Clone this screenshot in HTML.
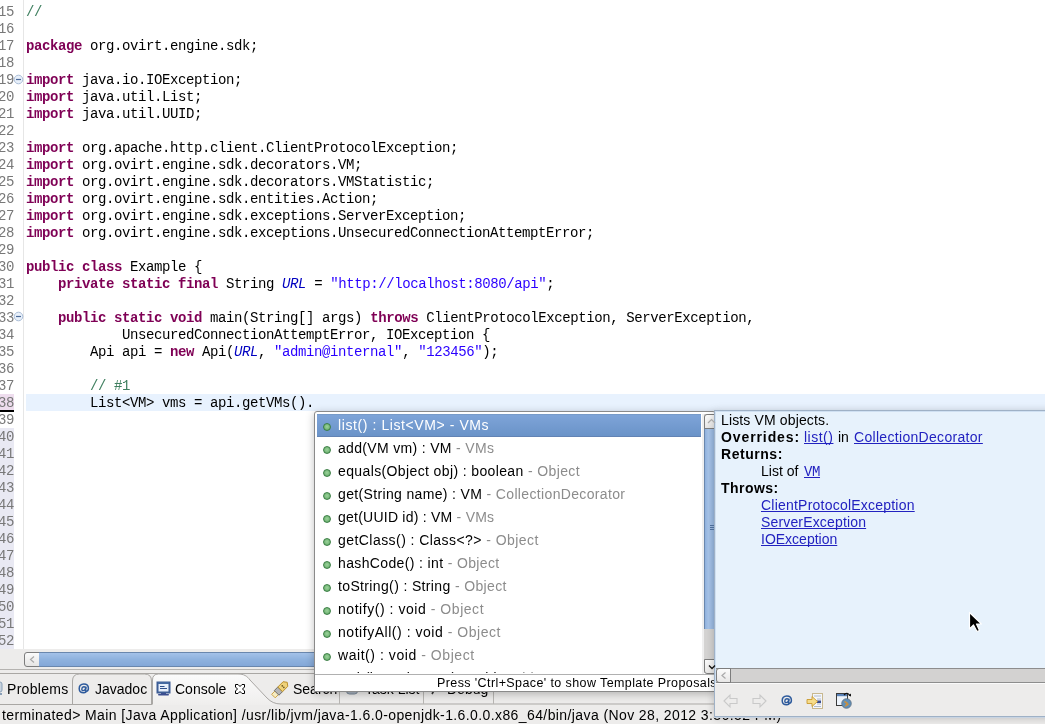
<!DOCTYPE html>
<html><head><meta charset="utf-8">
<style>
*{margin:0;padding:0;box-sizing:border-box}
html,body{width:1045px;height:724px;overflow:hidden;background:#fff;position:relative}
#wrap{position:absolute;left:0;top:0;width:1045px;height:724px;will-change:transform}
body{font-family:"Liberation Sans",sans-serif;-webkit-font-smoothing:antialiased}
.abs{position:absolute}
#code{position:absolute;left:26px;top:-13px;font-family:"Liberation Mono",monospace;font-size:14px;letter-spacing:-0.4px;line-height:17px;white-space:pre;color:#000}
#code div{height:17px}
.k{color:#7F0055;font-weight:bold}
.c{color:#3F7F5F}
.s{color:#2A00FF}
.f{color:#0000C0;font-style:italic}
#nums{position:absolute;left:-10px;top:-13px;width:24px;font-family:"Liberation Mono",monospace;font-size:14px;letter-spacing:-0.4px;line-height:17px;white-space:pre;color:#787878;text-align:right}
#nums div{height:17px}
.it{height:23px;line-height:23px;padding-left:21px;position:relative;font-size:14px;color:#000;white-space:pre}
.it b{font-weight:normal;color:#8c8c8c}
.it.sel{color:#fff}
.it i{position:absolute;left:6px;top:9px;width:8px;height:8px;border-radius:50%;background:radial-gradient(circle at 50% 45%,#9ad39a,#78b87a 60%,#3f8a48);border:1px solid #3b7f45}
.jd{font-size:14px;line-height:17px;white-space:pre;color:#000}
.jd b{font-weight:bold}
.jd u{color:#2222C0;text-decoration:underline;text-decoration-skip-ink:none}
.tab{font-family:"Liberation Sans",sans-serif;font-size:14px;line-height:17px;color:#000;white-space:pre}
</style></head><body><div id="wrap">
<!-- line number tints -->
<div class="abs" style="left:0;top:394px;width:14px;height:17px;background:#EEDDEE"></div>
<div class="abs" style="left:0;top:410px;width:14px;height:2px;background:#000"></div>
<div class="abs" style="left:0;top:428px;width:14px;height:221px;background:#E9E9F3"></div>
<!-- ruler line -->
<div class="abs" style="left:23px;top:0;width:1px;height:649px;background:#E6E6E6"></div>
<!-- current line -->
<div class="abs" style="left:26px;top:394px;width:1019px;height:17px;background:#E8F2FE"></div>
<div id="nums"><div>14</div><div>15</div><div>16</div><div>17</div><div>18</div><div>19</div><div>20</div><div>21</div><div>22</div><div>23</div><div>24</div><div>25</div><div>26</div><div>27</div><div>28</div><div>29</div><div>30</div><div>31</div><div>32</div><div>33</div><div>34</div><div>35</div><div>36</div><div>37</div><div>38</div><div>39</div><div>40</div><div>41</div><div>42</div><div>43</div><div>44</div><div>45</div><div>46</div><div>47</div><div>48</div><div>49</div><div>50</div><div>51</div><div>52</div></div>
<div id="code"><div class="c">//</div><div class="c">//</div><div></div><div><span class="k">package</span> org.ovirt.engine.sdk;</div><div></div><div><span class="k">import</span> java.io.IOException;</div><div><span class="k">import</span> java.util.List;</div><div><span class="k">import</span> java.util.UUID;</div><div></div><div><span class="k">import</span> org.apache.http.client.ClientProtocolException;</div><div><span class="k">import</span> org.ovirt.engine.sdk.decorators.VM;</div><div><span class="k">import</span> org.ovirt.engine.sdk.decorators.VMStatistic;</div><div><span class="k">import</span> org.ovirt.engine.sdk.entities.Action;</div><div><span class="k">import</span> org.ovirt.engine.sdk.exceptions.ServerException;</div><div><span class="k">import</span> org.ovirt.engine.sdk.exceptions.UnsecuredConnectionAttemptError;</div><div></div><div><span class="k">public</span> <span class="k">class</span> Example {</div><div>    <span class="k">private</span> <span class="k">static</span> <span class="k">final</span> String <span class="f">URL</span> = <span class="s">"http://localhost:8080/api"</span>;</div><div></div><div>    <span class="k">public</span> <span class="k">static</span> <span class="k">void</span> main(String[] args) <span class="k">throws</span> ClientProtocolException, ServerException,</div><div>            UnsecuredConnectionAttemptError, IOException {</div><div>        Api api = <span class="k">new</span> Api(<span class="f">URL</span>, <span class="s">"admin@internal"</span>, <span class="s">"123456"</span>);</div><div></div><div>        <span class="c">// #1</span></div><div>        List&lt;VM&gt; vms = api.getVMs().</div></div>

<!-- bottom area -->
<div class="abs" style="left:0;top:649px;width:1045px;height:75px;background:#EDECEB"></div>
<!-- h scrollbar -->
<div class="abs" style="left:24px;top:652px;width:16px;height:15px;background:linear-gradient(#fbfbfb,#e6e5e4);border:1px solid #7d7d7d;border-radius:3px 0 0 3px"></div>
<svg class="abs" style="left:24px;top:652px" width="16" height="15"><path d="M10 4.5 L6.5 7.5 L10 10.5" stroke="#aaa" stroke-width="1.2" fill="none"/></svg>
<div class="abs" style="left:39px;top:652px;width:1006px;height:15px;background:linear-gradient(#a4c2e8,#8fb2de 50%,#84a8d8);border-top:1px solid #6a87ad;border-bottom:1px solid #6a87ad"></div>
<div class="abs" style="left:0;top:669px;width:1045px;height:1px;background:#b5b3b0"></div>
<div class="abs" style="left:0;top:673px;width:1045px;height:1px;background:#a9a7a4"></div>
<div class="abs" style="left:0;top:704px;width:1045px;height:1px;background:#a9a7a4"></div>

<!-- tabs -->
<svg class="abs" style="left:0;top:673px" width="1045" height="32">
 <path d="M72.5 31 V8 Q72.5 1 79.5 1 H144.5 Q151.5 1 151.5 8 V31" fill="none" stroke="#a9a7a4"/>
 <defs><linearGradient id="tg" x1="0" y1="0" x2="0" y2="1"><stop offset="0" stop-color="#fbfbfb"/><stop offset="1" stop-color="#efeeed"/></linearGradient></defs>
 <path d="M152.5 32 V7 Q152.5 1 158.5 1 H238 C244 1 247 3 250 7 L267 25 C271 29 275 31 281 31 H1045 V32 Z" fill="url(#tg)"/>
 <path d="M152.5 31 V7 Q152.5 1 158.5 1 H238 C244 1 247 3 250 7 L267 25 C271 29 275 31 281 31 H1045" fill="none" stroke="#a9a7a4"/>
 <path d="M339.5 31 V6 M423.5 31 V6 M493.5 31 V6" stroke="#b8b6b3"/>
</svg>
<div class="abs" style="left:0;top:704px;width:152px;height:1px;background:#a9a7a4"></div>
<div class="abs tab" style="left:7px;top:681px;letter-spacing:0.3px">Problems</div>
<div class="abs tab" style="left:95px;top:681px">Javadoc</div>
<div class="abs tab" style="left:175px;top:681px">Console</div>
<div class="abs tab" style="left:293px;top:681px">Search</div>
<div class="abs tab" style="left:365px;top:681px">Task List</div>
<div class="abs tab" style="left:447px;top:681px">Debug</div>
<div class="abs tab" id="cons" style="left:2px;top:707px;white-space:pre;letter-spacing:0.4px">terminated&gt; Main [Java Application] /usr/lib/jvm/java-1.6.0-openjdk-1.6.0.0.x86_64/bin/java (Nov 28, 2012 3:36:52 PM)</div>

<svg class="abs" style="left:345px;top:682px" width="14" height="14"><rect x="1.5" y="2" width="11" height="10" rx="3" fill="#a9b4c0" stroke="#7a8898"/></svg>
<svg class="abs" style="left:428px;top:682px" width="14" height="14"><path d="M4 12 L9 3" stroke="#333" stroke-width="1.6"/></svg>
<!-- completion popup -->
<div class="abs" style="left:314px;top:411px;width:402px;height:281px;background:#fff;border:1px solid #8a8a8a;border-radius:3px 3px 0 0;box-shadow:0 2px 8px rgba(0,0,0,0.25)"></div>
<div class="abs" style="left:317px;top:414px;width:384px;height:23px;background:linear-gradient(#7ea4d8,#6a93c8);border-top:1px solid #779bc9;border-bottom:1px solid #6283b4"></div>
<div id="items" class="abs" style="left:317px;top:414px;width:384px;height:259px;overflow:hidden">
<div class="it sel" style="letter-spacing:0.586px"><i></i>list() : List&lt;VM&gt; - VMs</div>
<div class="it" style="letter-spacing:0.33px"><i></i>add(VM vm) : VM<b> - VMs</b></div>
<div class="it" style="letter-spacing:0.378px"><i></i>equals(Object obj) : boolean<b> - Object</b></div>
<div class="it" style="letter-spacing:0.35px"><i></i>get(String name) : VM<b> - CollectionDecorator</b></div>
<div class="it" style="letter-spacing:0.236px"><i></i>get(UUID id) : VM<b> - VMs</b></div>
<div class="it" style="letter-spacing:0.445px"><i></i>getClass() : Class&lt;?&gt;<b> - Object</b></div>
<div class="it" style="letter-spacing:0.362px"><i></i>hashCode() : int<b> - Object</b></div>
<div class="it" style="letter-spacing:0.359px"><i></i>toString() : String<b> - Object</b></div>
<div class="it" style="letter-spacing:0.543px"><i></i>notify() : void<b> - Object</b></div>
<div class="it" style="letter-spacing:0.535px"><i></i>notifyAll() : void<b> - Object</b></div>
<div class="it" style="letter-spacing:0.552px"><i></i>wait() : void<b> - Object</b></div>
<div class="it" style="letter-spacing:0.45px"><i></i>wait(long timeout) : void<b> - Object</b></div>
</div>
<!-- v scrollbar -->
<div class="abs" style="left:702px;top:414px;width:2px;height:260px;background:#efefef"></div>
<div class="abs" style="left:704px;top:414px;width:12px;height:259px;background:#d4d3d2"></div>
<div class="abs" style="left:704px;top:428px;width:12px;height:201px;background:linear-gradient(90deg,#8fb1dd,#a7c4e9 30%,#94b5df);border-left:1px solid #6a87ad"></div>
<div class="abs" style="left:704px;top:414px;width:12px;height:15px;background:linear-gradient(#fbfbfb,#e8e7e6);border:1px solid #7d7d7d;border-radius:3px 0 0 0"></div>
<div class="abs" style="left:704px;top:659px;width:12px;height:15px;background:linear-gradient(#fbfbfb,#e8e7e6);border:1px solid #7d7d7d;border-radius:0 0 0 3px"></div>
<div class="abs" style="left:315px;top:674px;width:400px;height:1px;background:#b0b0b0"></div>

<div class="abs tab" style="left:437px;top:675px;width:300px;font-size:12.5px;letter-spacing:0.4px">Press 'Ctrl+Space' to show Template Proposals</div>

<!-- javadoc popup -->
<div class="abs" style="left:714px;top:410px;width:340px;height:307px;background:#E7F2FC;border:1px solid #9fb1c6;box-shadow:inset 1px 1px 0 #cfe0f2,0 1px 8px rgba(0,0,0,0.22)"></div>
<div class="abs jd" style="left:721px;top:412px;letter-spacing:0.14px">Lists VM objects.</div>
<div class="abs jd" style="left:721px;top:429px"><b style="letter-spacing:0.9px">Overrides:</b></div><div class="abs jd" style="left:804px;top:429px"><u style="letter-spacing:0.5px">list()</u></div><div class="abs jd" style="left:838px;top:429px">in</div><div class="abs jd" style="left:854px;top:429px"><u style="letter-spacing:0.31px">CollectionDecorator</u></div>
<div class="abs jd" style="left:721px;top:446px"><b style="letter-spacing:0.54px">Returns:</b></div>
<div class="abs jd" style="left:761px;top:463px">List of</div><div class="abs jd" style="left:804px;top:463px"><u style="font-family:Liberation Mono;letter-spacing:-0.4px">VM</u></div>
<div class="abs jd" style="left:721px;top:480px"><b style="letter-spacing:0.47px">Throws:</b></div>
<div class="abs jd" style="left:761px;top:497px"><u style="letter-spacing:0.22px">ClientProtocolException</u></div>
<div class="abs jd" style="left:761px;top:514px"><u style="letter-spacing:0.16px">ServerException</u></div>
<div class="abs jd" style="left:761px;top:531px"><u>IOException</u></div>
<div class="abs" style="left:714px;top:717px;width:331px;height:1px;background:#c8d4e2"></div>
<!-- javadoc h scrollbar -->
<div class="abs" style="left:716px;top:668px;width:329px;height:15px;background:#d3d2d1;border-top:1px solid #8d8d8d;border-bottom:1px solid #8d8d8d"></div>
<div class="abs" style="left:716px;top:668px;width:15px;height:15px;background:linear-gradient(#fbfbfb,#e8e7e6);border:1px solid #7d7d7d;border-radius:3px 0 0 3px"></div>
<svg class="abs" style="left:716px;top:668px" width="15" height="15"><path d="M9.5 4.5 L6 7.5 L9.5 10.5" stroke="#aaa" stroke-width="1.2" fill="none"/></svg>
<div class="abs" style="left:715px;top:683px;width:330px;height:1px;background:#fafafa"></div>
<div class="abs" style="left:715px;top:684px;width:330px;height:32px;background:#EDECEB"></div>

<!-- tab icons -->
<svg class="abs" style="left:0;top:681px" width="4" height="16"><rect x="-6" y="1" width="8" height="10" rx="2" fill="#c8d4e0" stroke="#8aa0b8"/><rect x="-6" y="12" width="8" height="2" fill="#8aa0b8"/></svg>
<svg class="abs" style="left:78px;top:683px" width="12" height="12"><path d="M8.6 8.3 Q7.6 9.6 6 9.8 Q1.3 10 1.2 5.8 Q1.2 1.2 5.8 1.1 Q10.3 1.1 10.4 5.3 Q10.4 8.2 8.4 8.2 Q7.4 8.2 7.6 6.8 L8.1 3.7" fill="none" stroke="#2d5a9c" stroke-width="1.5"/><path d="M7.7 5.5 Q7.4 3.6 5.9 3.7 Q3.9 3.9 3.8 6 Q3.8 7.7 5.2 7.6 Q7 7.5 7.6 5.5" fill="none" stroke="#2d5a9c" stroke-width="1.4"/></svg>
<svg class="abs" style="left:156px;top:681px" width="16" height="16">
 <rect x="1.5" y="1.5" width="12" height="10" fill="#e6eefa" stroke="#3d5d95" stroke-width="2"/>
 <rect x="2" y="1" width="11" height="2" fill="#4468a0"/>
 <path d="M4 5.5 H8.5 M4 7.5 H11" stroke="#2f4f8a" stroke-width="1.2"/>
 <rect x="5" y="12" width="5" height="1.5" fill="#3a4d8f"/><rect x="2" y="13" width="11" height="1.6" rx="0.8" fill="#3a4d8f"/>
</svg>
<svg class="abs" style="left:234px;top:683px" width="12" height="12"><path d="M1.5 1.5 H4 L6 3.5 L8 1.5 H10.5 V4 L8.5 6 L10.5 8 V10.5 H8 L6 8.5 L4 10.5 H1.5 V8 L3.5 6 L1.5 4 Z" fill="#fff" stroke="#000" stroke-width="1" stroke-linejoin="miter"/></svg>
<svg class="abs" style="left:270px;top:680px" width="20" height="18"><g transform="translate(10.5 9) rotate(-45)">
 <rect x="-10" y="-2.5" width="5" height="5" fill="#f7ecc0" stroke="#c9a040" stroke-width="0.9"/>
 <rect x="-5.5" y="-3.3" width="5" height="6.6" fill="#b5b5b5" stroke="#6a6a6a" stroke-width="0.9"/>
 <path d="M-0.5 -3.3 H7 L9.5 0 L7 3.3 H-0.5 Z" fill="#efd27a" stroke="#b98c25" stroke-width="0.9"/>
 <circle cx="3.5" cy="-1" r="0.8" fill="#6a5520"/><circle cx="3.5" cy="1.2" r="0.8" fill="#6a5520"/>
</g></svg>
<!-- fold icons -->
<svg class="abs" style="left:13px;top:74px" width="11" height="11"><circle cx="5.5" cy="5.5" r="4.3" fill="#e8f0fa" stroke="#a9bcd6"/><path d="M3 5.5 H8" stroke="#4a6a9a" stroke-width="1.2"/></svg>
<svg class="abs" style="left:13px;top:311px" width="11" height="11"><circle cx="5.5" cy="5.5" r="4.3" fill="#e8f0fa" stroke="#a9bcd6"/><path d="M3 5.5 H8" stroke="#4a6a9a" stroke-width="1.2"/></svg>
<!-- v scrollbar arrows -->
<svg class="abs" style="left:704px;top:414px" width="12" height="15"><path d="M4 9 L7.5 5.5 L11 9" stroke="#aaa" stroke-width="1.2" fill="none"/></svg>
<svg class="abs" style="left:704px;top:659px" width="12" height="15"><path d="M5 6.5 L8 9.5 L11 6.5" stroke="#111" stroke-width="1.3" fill="none"/></svg>
<svg class="abs" style="left:704px;top:522px" width="12" height="12"><path d="M6 3.5 H10 M6 5.5 H10 M6 7.5 H10" stroke="#4d6c98" stroke-width="1"/></svg>
<!-- javadoc toolbar icons -->
<svg class="abs" style="left:722px;top:692px" width="18" height="18"><path d="M2 9 L8 3 V6.5 H15 V11.5 H8 V15 Z" fill="none" stroke="#c9c9c9" stroke-width="1.1"/></svg>
<svg class="abs" style="left:750px;top:692px" width="18" height="18"><path d="M16 9 L10 3 V6.5 H3 V11.5 H10 V15 Z" fill="none" stroke="#c9c9c9" stroke-width="1.1"/></svg>
<svg class="abs" style="left:781px;top:695px" width="12" height="12"><path d="M8.6 8.3 Q7.6 9.6 6 9.8 Q1.3 10 1.2 5.8 Q1.2 1.2 5.8 1.1 Q10.3 1.1 10.4 5.3 Q10.4 8.2 8.4 8.2 Q7.4 8.2 7.6 6.8 L8.1 3.7" fill="none" stroke="#2d5a9c" stroke-width="1.5"/><path d="M7.7 5.5 Q7.4 3.6 5.9 3.7 Q3.9 3.9 3.8 6 Q3.8 7.7 5.2 7.6 Q7 7.5 7.6 5.5" fill="none" stroke="#2d5a9c" stroke-width="1.4"/></svg>
<svg class="abs" style="left:806px;top:693px" width="18" height="17">
 <rect x="6.5" y="0.5" width="10" height="15" fill="#f4f6fa" stroke="#c8b890"/>
 <path d="M8 3 H15 M11 6 H15 M11 11 H15 M8 13.5 H15" stroke="#a8b4c8" stroke-width="0.9"/>
 <rect x="11" y="7.5" width="4" height="2.5" fill="#3a4d8f"/>
 <path d="M1 6.5 H6 V3.5 L11.5 8.5 L6 13.5 V10.5 H1 Z" fill="#f6dc8a" stroke="#c99a30" stroke-width="0.9"/>
</svg>
<svg class="abs" style="left:835px;top:692px" width="18" height="18">
 <rect x="1.5" y="1.5" width="11" height="12" fill="#eef4fb" stroke="#3a3a3a"/>
 <rect x="2" y="2" width="10" height="2.2" fill="#5b83b8"/>
 <path d="M9 3 Q12 -0.5 15 3.5" stroke="#111" stroke-width="1.2" fill="none"/><path d="M13.5 3.5 L16 4.5 L16 1.5 Z" fill="#111"/>
 <circle cx="11.5" cy="11.5" r="4.8" fill="#5f8fb8" stroke="#607080" stroke-width="0.8"/>
 <path d="M9.5 9.5 L12 11 L11 13.5 L13.5 12" stroke="#c89040" stroke-width="1.5" fill="none"/>
</svg>
<!-- mouse cursor -->
<svg class="abs" style="left:968px;top:611px" width="16" height="22"><path d="M1.5 1.5 V18 L5.5 14 L9 20.5 L11.5 19.5 L8.5 13 H13.5 Z" fill="#000" stroke="#fff" stroke-width="1.2" stroke-linejoin="round"/></svg>

</div></body></html>
